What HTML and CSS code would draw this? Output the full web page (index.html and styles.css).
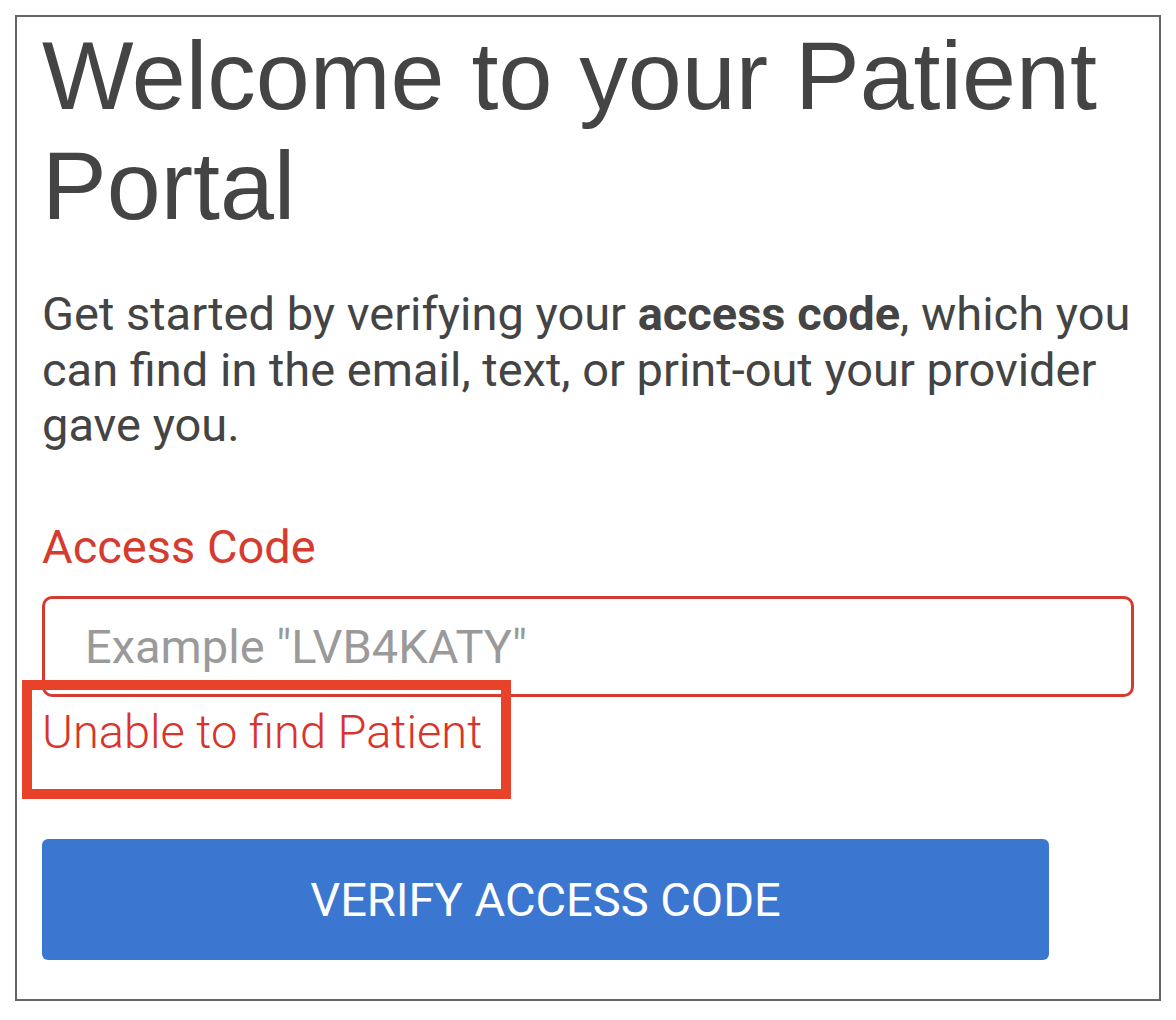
FILE: index.html
```html
<!DOCTYPE html>
<html lang="en">
<head>
  <meta charset="UTF-8" />
  <meta name="viewport" content="width=device-width, initial-scale=1.0"/>
  <title>Patient Portal</title>
  <link rel="stylesheet" href="styles.css">
</head>
<body>
  <div class="frame">
    <h1 class="title">Welcome to your Patient Portal</h1>

    <p class="intro">
      Get started by verifying your <strong>access code</strong>, which you can find in the email, text, or print-out your provider gave you.
    </p>

    <form class="access-form" onsubmit="return false;">
      <label class="field-label" for="accessCode">Access Code</label>
      <input class="field-input" id="accessCode" type="text" placeholder='Example "LVB4KATY"'/>
      <div class="field-error">
        <span>Unable to find Patient</span>
        <span class="callout"></span>
      </div>
      <button class="verify-btn" type="submit">VERIFY ACCESS CODE</button>
    </form>
  </div>
</body>
</html>
```

FILE: styles.css
```css
body {
  margin: 0;
  background: #fff;
  font-family: Roboto, "Liberation Sans", sans-serif;
  color: #444;
}

.frame {
  box-sizing: border-box;
  margin: 15px;
  width: 1146px;
  height: 986px;
  padding: 4px 25px 0;
  border: 2px solid #666;
}

.title {
  margin: 0;
  font-family: "Liberation Sans", Arial, sans-serif;
  font-weight: normal;
  font-size: 97px;
  line-height: 110px;
  color: #444;
}

.intro {
  margin: 45px 0 0;
  font-size: 47px;
  line-height: 55.5px;
}

.intro strong {
  font-weight: bold;
}

.access-form {
  display: flex;
  flex-direction: column;
  align-items: flex-start;
}

.field-label {
  margin-top: 66px;
  font-size: 47px;
  line-height: 56px;
  color: #d63b30;
}

.field-input {
  margin-top: 21px;
  box-sizing: border-box;
  width: 100%;
  height: 101px;
  padding: 0 40px;
  border: 3px solid #d63b30;
  border-radius: 10px;
  font-family: Roboto, sans-serif;
  font-size: 47px;
  color: #444;
  outline: none;
}

.field-input::placeholder {
  color: #9a9a9a;
}

.field-error {
  position: relative;
  margin-top: 7px;
  font-size: 47px;
  font-weight: 300;
  line-height: 56px;
  color: #d9342b;
}

.callout {
  position: absolute;
  left: -20px;
  top: -24px;
  width: 469px;
  height: 99px;
  border: 10px solid #e8432a;
}

.verify-btn {
  margin-top: 79px;
  width: 1007px;
  height: 121px;
  border: none;
  border-radius: 6px;
  background: #3b77d1;
  color: #fff;
  font-family: Roboto, sans-serif;
  font-size: 47px;
  cursor: pointer;
}
```
